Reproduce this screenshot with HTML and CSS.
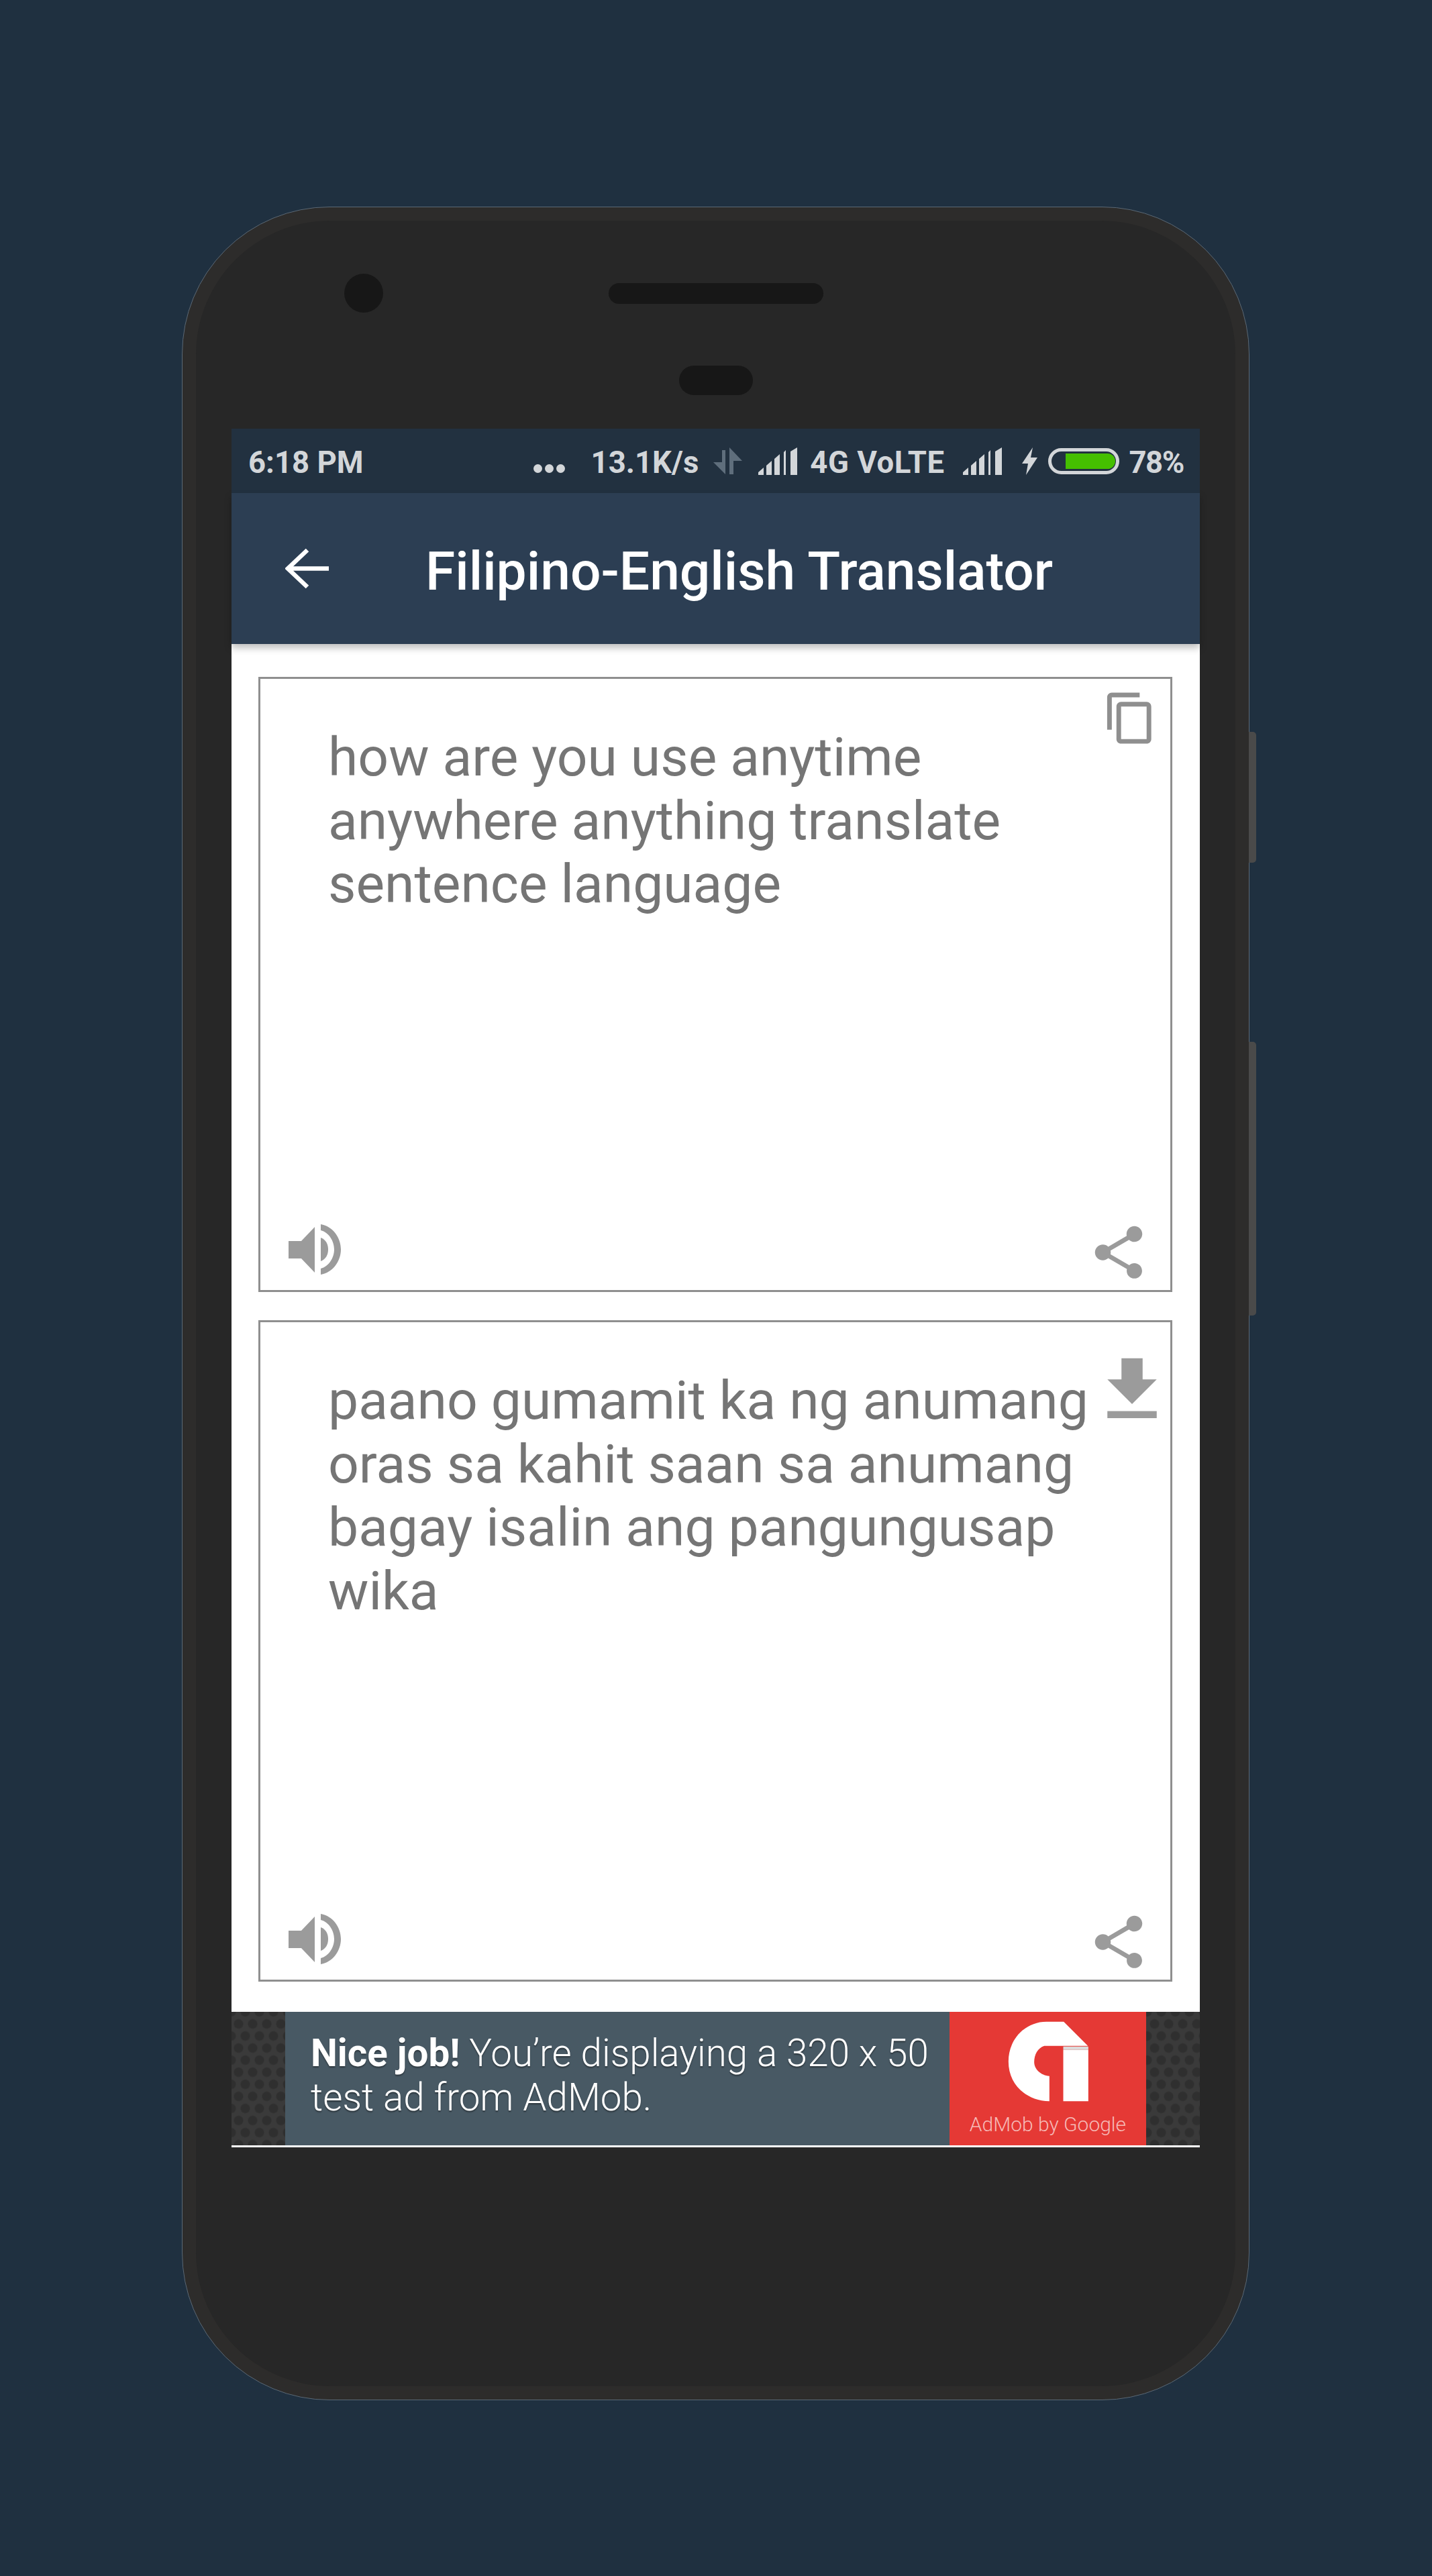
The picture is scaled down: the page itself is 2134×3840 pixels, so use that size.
FILE: index.html
```html
<!DOCTYPE html>
<html>
<head>
    <link rel="stylesheet" href="styles.css">
</head>
<body>
    <div class="phone">
        <div class="side-btn side-btn-power"></div>
        <div class="side-btn side-btn-volume"></div>
        <div class="phone-body">
            <div class="top-row">
                <div class="camera"></div>
                <div class="speaker"></div>
            </div>
            <div class="sensor"></div>

            <div class="screen">
                <div class="status-bar">
                    <span class="status-text status-time">6:18 PM</span>
                    <span class="status-dots"><i></i><i></i><i></i></span>
                    <span class="status-text status-speed">13.1K/s</span>
                    <svg class="status-arrows" viewBox="0 0 44 40" width="44" height="40">
                        <path d="M13 4h5v36L0 22h13z"/>
                        <path d="M24 0l19 20H30v20h-6z"/>
                    </svg>
                    <svg class="status-signal signal-one" viewBox="0 0 59 41" width="59" height="41">
                        <path d="M0 41v-4l8-7v11zM12 41V27l8-7v21zM24 41V17l8-7v31zM38 41V7l3-3v37zM48 41V6l10-6v41z"/>
                    </svg>
                    <span class="status-text status-net">4G VoLTE</span>
                    <svg class="status-signal signal-two" viewBox="0 0 59 41" width="59" height="41">
                        <path d="M0 41v-4l8-7v11zM12 41V27l8-7v21zM24 41V17l8-7v31zM38 41V7l3-3v37zM48 41V6l10-6v41z"/>
                    </svg>
                    <svg class="status-bolt" viewBox="0 0 23 41" width="23" height="41">
                        <path d="M16 0L0 24h9L6 41l17-26h-10z"/>
                    </svg>
                    <div class="battery"><div class="battery-fill"></div></div>
                    <span class="status-text status-pct">78%</span>
                </div>

                <div class="app-bar">
                    <svg class="back-arrow" viewBox="0 0 65 61" width="65" height="61">
                        <path d="M33 3L4 30.5 33 58M4 30.5h61" fill="none" stroke="#fff" stroke-width="6.5"/>
                    </svg>
                    <h1 class="app-title">Filipino-English Translator</h1>
                </div>

                <div class="content">
                    <div class="text-box box-source">
                        <p class="box-text">how are you use anytime anywhere anything translate sentence language</p>
                        <svg class="icon icon-copy" viewBox="0 0 24 24" width="83" height="83">
                            <path d="M16 1H4c-1.1 0-2 .9-2 2v14h2V3h12V1zm3 4H8c-1.1 0-2 .9-2 2v14c0 1.1.9 2 2 2h11c1.1 0 2-.9 2-2V7c0-1.1-.9-2-2-2zm0 16H8V7h11v14z"/>
                        </svg>
                        <svg class="icon icon-speak" viewBox="0 0 78 75" width="78" height="75">
                            <path d="M0 25h19L39 4v68L19 51H0z"/>
                            <path d="M48 20c8 3 11 10 11 17.500s-3 14.500-11 17.500z"/>
                            <path d="M48 0c18 3 30 20 30 37.500S66 72 48 75v-9c12-3 20-16 20-28.500S60 12 48 9z"/>
                        </svg>
                        <svg class="icon icon-share" viewBox="0 0 24 24" width="94" height="94">
                            <path d="M18 16.080c-.76 0-1.440.3-1.960.77L8.910 12.700c.05-.23.09-.46.09-.7s-.04-.47-.09-.7l7.050-4.110c.54.5 1.250.81 2.040.81 1.660 0 3-1.340 3-3s-1.340-3-3-3-3 1.340-3 3c0 .24.04.47.09.7L8.040 9.810C7.500 9.310 6.790 9 6 9c-1.660 0-3 1.340-3 3s1.340 3 3 3c.79 0 1.500-.31 2.040-.81l7.120 4.160c-.05.21-.08.43-.08.65 0 1.610 1.310 2.920 2.920 2.920 1.610 0 2.920-1.310 2.920-2.920s-1.310-2.920-2.920-2.920z"/>
                        </svg>
                    </div>

                    <div class="text-box box-result">
                        <p class="box-text">paano gumamit ka ng anumang oras sa kahit saan sa anumang bagay isalin ang pangungusap wika</p>
                        <svg class="icon icon-download" viewBox="0 0 24 24" width="126" height="126">
                            <path d="M19 9h-4V3H9v6H5l7 7 7-7zM5 18v2h14v-2H5z"/>
                        </svg>
                        <svg class="icon icon-speak" viewBox="0 0 78 75" width="78" height="75">
                            <path d="M0 25h19L39 4v68L19 51H0z"/>
                            <path d="M48 20c8 3 11 10 11 17.500s-3 14.500-11 17.500z"/>
                            <path d="M48 0c18 3 30 20 30 37.500S66 72 48 75v-9c12-3 20-16 20-28.500S60 12 48 9z"/>
                        </svg>
                        <svg class="icon icon-share" viewBox="0 0 24 24" width="94" height="94">
                            <path d="M18 16.080c-.76 0-1.440.3-1.960.77L8.910 12.700c.05-.23.09-.46.09-.7s-.04-.47-.09-.7l7.050-4.110c.54.5 1.250.81 2.040.81 1.660 0 3-1.340 3-3s-1.340-3-3-3-3 1.340-3 3c0 .24.04.47.09.7L8.040 9.810C7.500 9.310 6.790 9 6 9c-1.660 0-3 1.340-3 3s1.340 3 3 3c.79 0 1.500-.31 2.040-.81l7.120 4.160c-.05.21-.08.43-.08.65 0 1.610 1.310 2.920 2.920 2.920 1.610 0 2.920-1.310 2.920-2.920s-1.310-2.920-2.920-2.920z"/>
                        </svg>
                    </div>
                </div>

                <div class="ad-banner">
                    <div class="ad-text">
                        <div class="ad-line"><b>Nice job!</b> <span>You’re displaying a 320 x 50</span></div>
                        <div class="ad-line">test ad from AdMob.</div>
                    </div>
                    <div class="ad-brand">
                        <svg class="ad-logo" viewBox="60 40 365 360" width="122" height="120">
                            <path fill="#fff" d="M312 42L420 150 H225C195 160 180 190 180 222C180 255 210 282 248 285V398C140 395 65 320 65 220C65 120 140 42 235 42z"/>
                            <path fill="#fff" d="M310 168h112v230H310z"/>
                            <path fill="#dcdcdc" d="M310 153h112v15H310z"/>
                        </svg>
                        <span class="ad-brand-name">AdMob by Google</span>
                    </div>
                </div>
            </div>
        </div>
    </div>
</body>
</html>
```

FILE: styles.css
```css
body {
    margin: 0;
    background: #1f3040;
    font-family: 'Roboto', sans-serif;
    height: 3840px;
    overflow: hidden;
}

.phone {
    position: relative;
    box-sizing: border-box;
    width: 1591px;
    height: 3270px;
    margin: 308px 0 0 271px;
    padding: 20px;
    background: #2d2c2b;
    border: 1px solid #5a6875;
    border-radius: 220px;
}

.side-btn {
    position: absolute;
    left: 100%;
    width: 11px;
    background: #4a4a4a;
    border-radius: 0 5px 5px 0;
}

.side-btn-power { top: 782px; height: 195px; }
.side-btn-volume { top: 1244px; height: 408px; }

.phone-body {
    box-sizing: border-box;
    height: 100%;
    padding: 79px 53px 0;
    background: #272727;
    border-radius: 200px;
}

.top-row {
    position: relative;
    display: flex;
    justify-content: center;
    align-items: center;
    height: 58px;
}

.camera {
    position: absolute;
    left: 168px;
    top: 0;
    width: 58px;
    height: 58px;
    border-radius: 50%;
    background: #171717;
}

.speaker {
    width: 320px;
    height: 31px;
    border-radius: 16px;
    background: #171717;
}

.sensor {
    width: 110px;
    height: 44px;
    margin: 79px auto 50px;
    border-radius: 22px;
    background: #171717;
}

.screen {
    background: #fff;
}

/* status bar */
.status-bar {
    display: flex;
    align-items: center;
    height: 96px;
    padding-left: 25px;
    background: #223140;
    color: #d3d6d9;
    font-size: 45.5px;
    font-weight: 700;
}

.status-text { padding-top: 5px; }

.status-bar svg { fill: #d3d6d9; }

.status-dots {
    display: flex;
    gap: 4px;
    margin: 22px 0 0 253px;
}

.status-dots i {
    width: 13px;
    height: 13px;
    border-radius: 50%;
    background: #d3d6d9;
}

.status-speed { margin-left: 39px; }

.status-bar .status-arrows { margin-left: 22px; fill: #5f6e7c; }
.signal-one { margin-left: 23px; }
.status-net { margin-left: 18px; letter-spacing: 0.5px; }
.signal-two { margin-left: 28px; }
.status-bolt { margin-left: 29px; }

.battery {
    box-sizing: border-box;
    display: flex;
    justify-content: flex-end;
    width: 106px;
    height: 39px;
    margin-left: 16px;
    padding: 3px 1px 3px 21px;
    border: 5px solid #d3d6d9;
    border-radius: 20px;
}

.battery-fill {
    flex: 1;
    background: #45bf00;
    border-radius: 0 12px 12px 0;
}

.status-pct { margin-left: 14px; letter-spacing: -1.5px; }

/* app bar */
.app-bar {
    display: flex;
    align-items: center;
    height: 225px;
    padding-left: 80px;
    background: #2c3e53;
    box-shadow: 0 6px 10px rgba(0, 0, 0, 0.25);
    position: relative;
}

.app-title {
    margin: 9px 0 0 144px;
    color: #fff;
    font-size: 80.3px;
    font-weight: 500;
}

/* text boxes */
.content {
    display: flex;
    flex-direction: column;
    gap: 42px;
    padding: 49px 41px 45px 40px;
}

.text-box {
    position: relative;
    box-sizing: border-box;
    border: 3px solid #8f8f8f;
    padding: 70px 80px 0 101px;
}

.box-source { height: 917px; }
.box-result { height: 986px; }

.box-text {
    margin: 0;
    color: #757575;
    font-size: 80.4px;
    line-height: 94.5px;
}

.icon {
    position: absolute;
    fill: #9b9b9b;
}

.icon-copy { top: 17px; right: 18px; fill: #8f8f8f; }
.icon-download { top: 38px; right: -6px; }
.icon-speak { bottom: 23px; left: 42px; }
.icon-share { bottom: 9px; right: 30px; }

/* ad */
.ad-banner {
    display: flex;
    height: 199px;
    padding: 0 80px;
    border-bottom: 3px solid #fff;
    background-color: #3a3a3a;
    background-image:
        radial-gradient(circle, #2f2f2f 6px, transparent 8px),
        radial-gradient(circle, #2f2f2f 6px, transparent 8px);
    background-size: 21px 36px;
    background-position: 0 0, 10px 18px;
}

.ad-text {
    box-sizing: border-box;
    flex: 1;
    padding: 29px 0 0 38px;
    background: #485964;
    color: #fff;
    font-size: 56.5px;
    font-weight: 300;
    line-height: 66px;
    text-shadow: 0 2px 2px rgba(0, 0, 0, 0.4);
}

.ad-text b { font-weight: 700; }

.ad-brand {
    display: flex;
    flex-direction: column;
    align-items: center;
    width: 293px;
    padding-top: 14px;
    box-sizing: border-box;
    background: #e53935;
}

.ad-logo { margin-left: 1px; }

.ad-brand-name {
    margin-top: 16px;
    color: #f6b9b7;
    font-size: 30px;
    font-weight: 300;
    white-space: nowrap;
}
```
